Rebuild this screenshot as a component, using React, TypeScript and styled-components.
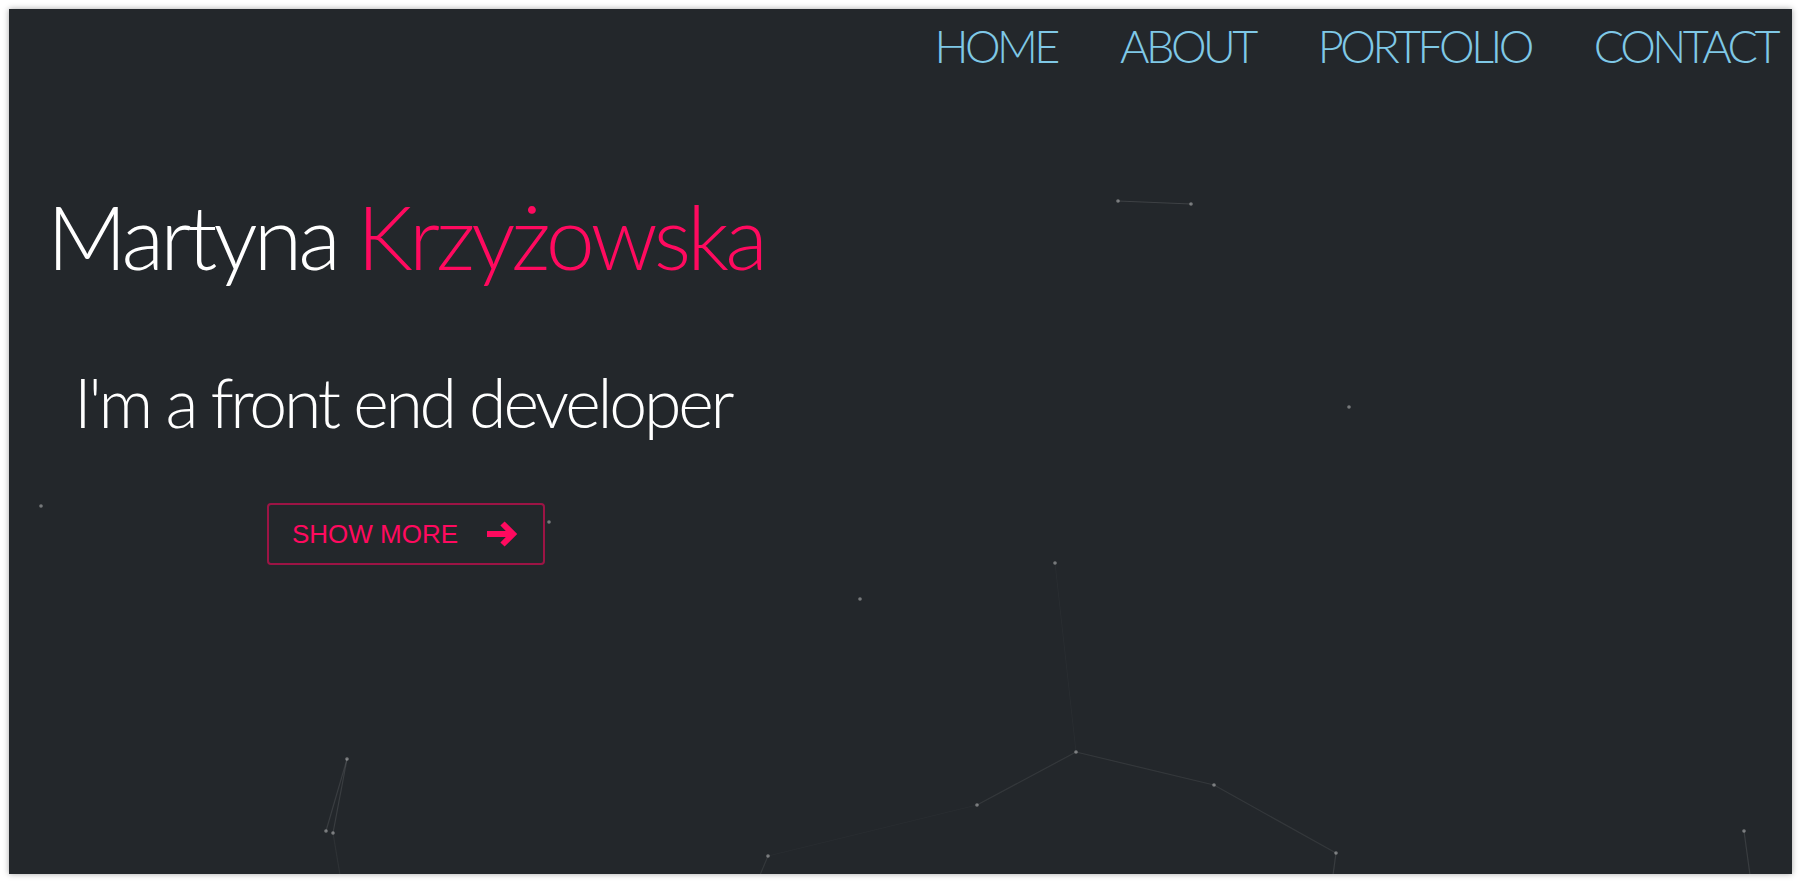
import { FC } from 'react'
import styled, { createGlobalStyle } from 'styled-components'

const PINK = '#ff0a5f'

const GlobalStyle = createGlobalStyle`
  html, body {
    margin: 0;
    height: 100%;
    background: #ffffff;
  }
  #root {
    height: 100%;
  }
  * {
    box-sizing: border-box;
  }
`

const Page = styled.div`
  height: 100vh;
  padding: 9px 8px 8px 9px;
`

const Hero = styled.section`
  position: relative;
  height: 100%;
  overflow: hidden;
  background: #23272b;
  box-shadow: 0 0 6px rgba(0, 0, 0, 0.35);
  font-family: Lato, 'Open Sans', sans-serif;
  font-weight: 300;
`

const ParticleLayer = styled.svg`
  position: absolute;
  inset: 0;
  width: 100%;
  height: 100%;
  pointer-events: none;
`

const Nav = styled.nav`
  position: relative;
  display: flex;
  justify-content: flex-end;
  gap: 63px;
  padding: 10px 15px 0 0;
`

const NavLink = styled.a`
  font-size: 45px;
  line-height: 1.2;
  letter-spacing: -3.5px;
  color: #7fc8e6;
  text-decoration: none;
  text-transform: uppercase;
  cursor: pointer;
`

const Intro = styled.div`
  position: relative;
  display: flex;
  flex-direction: column;
  align-items: flex-start;
  padding-left: 38px;
  margin-top: 111px;
`

const Title = styled.h1`
  margin: 0;
  font-size: 88px;
  font-weight: 300;
  line-height: 1.2;
  letter-spacing: -3.9px;
  color: #ffffff;
`

const Accent = styled.span`
  color: ${PINK};
`

const Subtitle = styled.p`
  margin: 71px 0 0 27px;
  font-size: 68px;
  line-height: 1.2;
  letter-spacing: -3.2px;
  color: #ffffff;
`

const ShowMore = styled.button`
  display: inline-flex;
  align-items: center;
  gap: 29px;
  height: 62px;
  margin: 61px 0 0 220px;
  padding: 0 25px 0 23px;
  background: transparent;
  border: 2px solid rgba(230, 10, 85, 0.62);
  border-radius: 4px;
  color: ${PINK};
  font-family: 'Liberation Sans', Arial, sans-serif;
  font-size: 26px;
  white-space: nowrap;
  text-transform: uppercase;
  cursor: pointer;
`

type Dot = [number, number]

const dots: Dot[] = [
  [1109, 192], [1182, 195], [1340, 398], [32, 497], [540, 513], [851, 590],
  [1046, 554], [1067, 743], [968, 796], [1205, 776], [1327, 844], [759, 847],
  [338, 750], [317, 822], [324, 824], [1735, 822],
]

// [from, to, opacity]
const links: [Dot, Dot, number][] = [
  [[1109, 192], [1182, 195], 0.12],
  [[1046, 554], [1067, 743], 0.025],
  [[1067, 743], [968, 796], 0.08],
  [[1067, 743], [1205, 776], 0.08],
  [[1205, 776], [1327, 844], 0.08],
  [[1327, 844], [1324, 866], 0.1],
  [[968, 796], [759, 847], 0.025],
  [[759, 847], [751, 866], 0.08],
  [[338, 750], [317, 822], 0.1],
  [[338, 750], [324, 824], 0.1],
  [[324, 824], [331, 866], 0.05],
  [[1735, 822], [1741, 866], 0.1],
]

const Particles: FC = () => (
  <ParticleLayer viewBox='0 0 1783 865' preserveAspectRatio='xMinYMin slice'>
    {links.map(([a, b, o], i) => (
      <line key={i} x1={a[0]} y1={a[1]} x2={b[0]} y2={b[1]} stroke={`rgba(255,255,255,${o})`} strokeWidth={1.2} />
    ))}
    {dots.map(([x, y], i) => (
      <circle key={i} cx={x} cy={y} r={1.8} fill='rgba(255,255,255,0.38)' />
    ))}
  </ParticleLayer>
)

const ArrowIcon: FC = () => (
  <svg width='31' height='28' viewBox='0 0 31 28' fill='none'>
    <path d='M0 14 H26 M15.5 3.5 L26 14 L15.5 24.5' stroke='currentColor' strokeWidth='6' />
  </svg>
)

const App: FC = () => (
  <>
    <GlobalStyle />
    <Page>
      <Hero>
        <Particles />
        <Nav>
          <NavLink>Home</NavLink>
          <NavLink>About</NavLink>
          <NavLink>Portfolio</NavLink>
          <NavLink>Contact</NavLink>
        </Nav>
        <Intro>
          <Title>
            Martyna <Accent>Krzyżowska</Accent>
          </Title>
          <Subtitle>I'm a front end developer</Subtitle>
          <ShowMore>
            Show more
            <ArrowIcon />
          </ShowMore>
        </Intro>
      </Hero>
    </Page>
  </>
)

export default App
